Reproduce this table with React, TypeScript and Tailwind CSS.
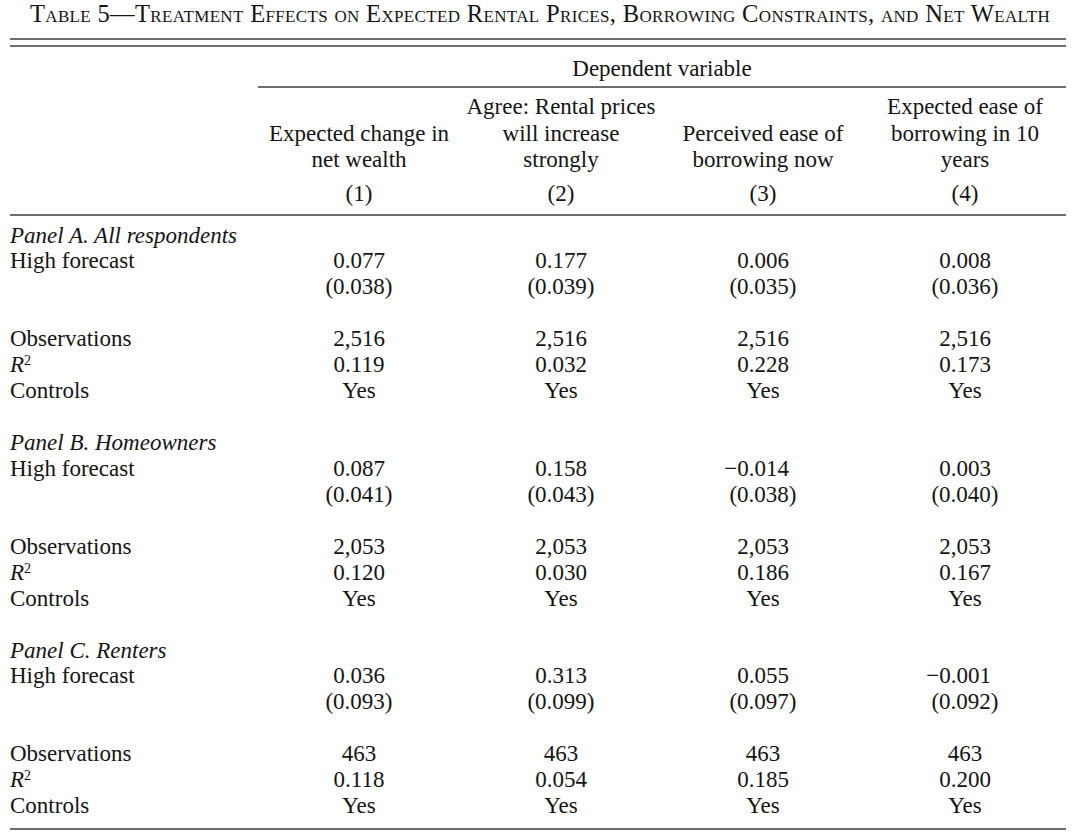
type Cell = string;

interface Row {
  label?: React.ReactNode;
  italic?: boolean;
  values?: Cell[];
}

const COLS = [
  ["", "Expected change in", "net wealth"],
  ["Agree: Rental prices", "will increase", "strongly"],
  ["", "Perceived ease of", "borrowing now"],
  ["Expected ease of", "borrowing in 10", "years"],
];

const R2 = (
  <span>
    <i>R</i>
    <span className="relative -top-[7px] text-[14px]">2</span>
  </span>
);

function panel(
  title: string,
  coef: Cell[],
  se: Cell[],
  obs: Cell[],
  r2: Cell[]
): Row[] {
  return [
    { label: title, italic: true },
    { label: "High forecast", values: coef },
    { values: se },
    {},
    { label: "Observations", values: obs },
    { label: R2, values: r2 },
    { label: "Controls", values: ["Yes", "Yes", "Yes", "Yes"] },
  ];
}

const ROWS: Row[] = [
  ...panel(
    "Panel A. All respondents",
    ["0.077", "0.177", "0.006", "0.008"],
    ["(0.038)", "(0.039)", "(0.035)", "(0.036)"],
    ["2,516", "2,516", "2,516", "2,516"],
    ["0.119", "0.032", "0.228", "0.173"]
  ),
  {},
  ...panel(
    "Panel B. Homeowners",
    ["0.087", "0.158", "−0.014", "0.003"],
    ["(0.041)", "(0.043)", "(0.038)", "(0.040)"],
    ["2,053", "2,053", "2,053", "2,053"],
    ["0.120", "0.030", "0.186", "0.167"]
  ),
  {},
  ...panel(
    "Panel C. Renters",
    ["0.036", "0.313", "0.055", "−0.001"],
    ["(0.093)", "(0.099)", "(0.097)", "(0.092)"],
    ["463", "463", "463", "463"],
    ["0.118", "0.054", "0.185", "0.200"]
  ),
];

// Negative numbers hang their minus sign to the left so the digits stay
// aligned with the rest of the column.
function Value({ v }: { v: string }) {
  if (v.startsWith("−")) {
    return (
      <span className="relative">
        <span className="absolute right-full">−</span>
        {v.slice(1)}
      </span>
    );
  }
  return <span>{v}</span>;
}

export default function App() {
  return (
    <div className="w-[1080px] h-[840px] bg-white text-[#141414] font-['Liberation_Serif',serif] text-[23px] leading-[26px]">
      <div className="pt-[1px] text-center text-[24.6px] leading-[26px] tracking-[0.33px] [font-variant-caps:small-caps] whitespace-nowrap">
        Table 5—Treatment Effects on Expected Rental Prices, Borrowing Constraints, and Net Wealth
      </div>

      <div className="mx-[10px] w-[1056px]">
        <div className="mt-[11px] h-[2px] bg-[#6e6e6e]" />
        <div className="mt-[5px] h-[2px] bg-[#6e6e6e]" />

        <div className="grid grid-cols-[248px_808px] mt-[9px]">
          <div />
          <div className="text-center">Dependent variable</div>
        </div>
        <div className="grid grid-cols-[248px_808px] mt-[4px]">
          <div />
          <div className="h-[2px] bg-[#6e6e6e]" />
        </div>

        <div className="grid grid-cols-[248px_repeat(4,202px)] mt-[6px] leading-[26.5px]">
          <div />
          {COLS.map((lines, i) => (
            <div key={i} className="flex flex-col items-center">
              {lines.map((l, j) => (
                <div key={j} className="h-[26.5px] whitespace-nowrap">
                  {l}
                </div>
              ))}
            </div>
          ))}
        </div>
        <div className="grid grid-cols-[248px_repeat(4,202px)] mt-[7px]">
          <div />
          {[1, 2, 3, 4].map((n) => (
            <div key={n} className="text-center">
              ({n})
            </div>
          ))}
        </div>
        <div className="mt-[7px] h-[2px] bg-[#6e6e6e]" />

        <div className="mt-[7px]">
          {ROWS.map((r, i) => (
            <div
              key={i}
              className="grid grid-cols-[248px_repeat(4,202px)] h-[25.95px]"
            >
              <div className={r.italic ? "italic whitespace-nowrap" : "whitespace-nowrap"}>
                {r.label}
              </div>
              {r.values?.map((v, j) => (
                <div key={j} className="text-center">
                  <Value v={v} />
                </div>
              ))}
            </div>
          ))}
        </div>

        <div className="mt-[9px] h-[2px] bg-[#6e6e6e]" />
      </div>
    </div>
  );
}
